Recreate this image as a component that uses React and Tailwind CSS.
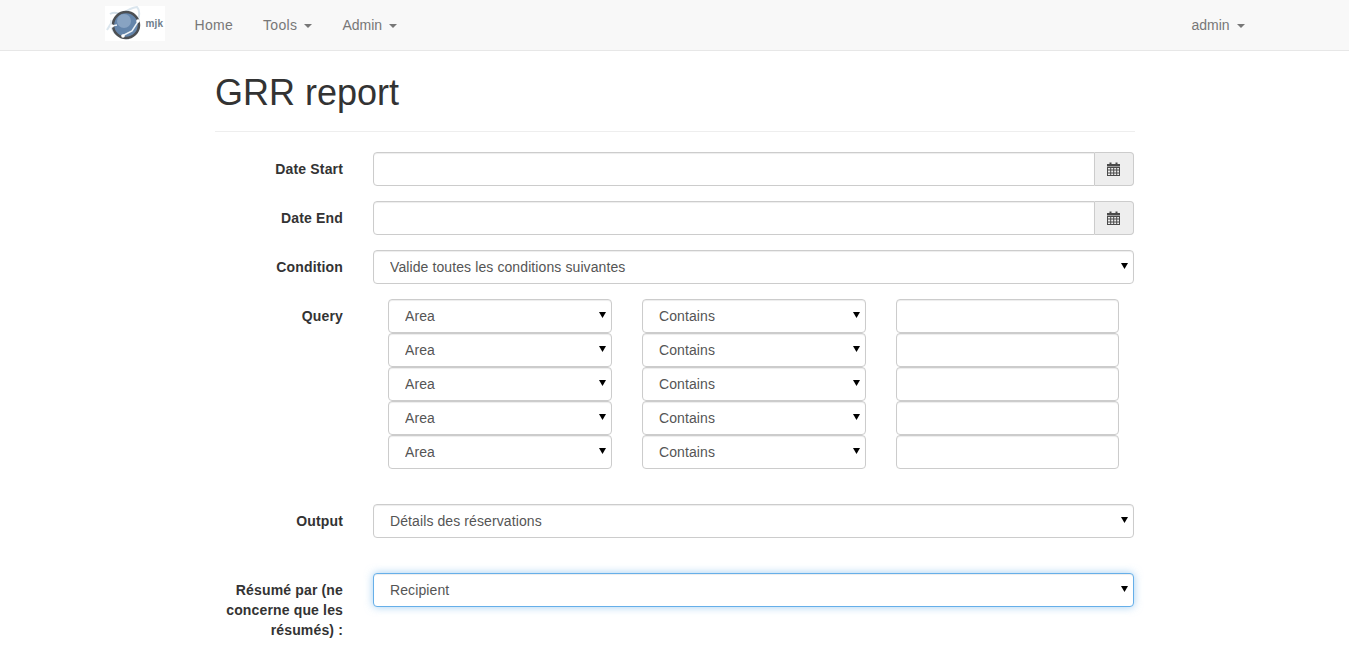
const fieldClass = "block w-full h-[34px] py-1.5 bg-white border rounded text-sm leading-5 tracking-[0.1px] text-[#555] outline-none";
const inputClass = `${fieldClass} px-3 border-[#ccc] shadow-[inset_0_1px_1px_rgba(0,0,0,0.075)]`;
const selectClass = `${fieldClass} pl-4 pr-3 appearance-none border-[#ccc] shadow-[inset_0_1px_1px_rgba(0,0,0,0.075)]`;
const focusClass = `${fieldClass} pl-4 pr-3 appearance-none border-[#66afe9] shadow-[inset_0_1px_1px_rgba(0,0,0,0.075),0_0_8px_rgba(102,175,233,0.6)]`;

function Caret() {
  return <span className="inline-block ml-[3px] align-middle w-0 h-0 border-x-4 border-x-transparent border-t-4 border-t-current"></span>;
}

function NavLink({ children, caret, className = "" }) {
  return (
    <a href="#" className={`block px-[15px] py-[15px] text-sm leading-5 text-[#777] ${className}`}>
      {children}
      {caret && <> <Caret /></>}
    </a>
  );
}

function Logo() {
  return (
    <div className="flex items-center w-[60px] h-[35px] bg-white overflow-hidden">
      <svg width="40" height="35" viewBox="0 0 40 35" className="shrink-0">
        <path d="M5 8 C12 3 26 14 33 26" fill="none" stroke="#d3e0ea" strokeWidth="2" />
        <path d="M2 24 C8 12 24 2 32 1 C36 5 34 14 30 20" fill="none" stroke="#dbe6ee" strokeWidth="2" />
        <path d="M6 14 C4 24 12 33 24 33" fill="none" stroke="#dbe6ee" strokeWidth="1.5" />
        <circle cx="21" cy="19" r="13" fill="#6485ab" stroke="#4c4f53" strokeWidth="2.5" />
        <circle cx="19" cy="15" r="7" fill="#88a3c2" />
        <path d="M7 20 L12 19 M17 30 L27 25 L34 14" fill="none" stroke="#eef3f7" strokeWidth="1.5" />
        <circle cx="7" cy="20" r="1.8" fill="#fff" />
        <circle cx="18" cy="30" r="1.8" fill="#fff" />
        <circle cx="33" cy="15" r="1.8" fill="#fff" />
      </svg>
      <span className="ml-[1px] text-[10px] leading-none font-bold tracking-[0.2px] text-[#6f7d8b]">mjk</span>
    </div>
  );
}

function CalendarIcon() {
  return (
    <svg width="13" height="14" viewBox="0 0 13 14" fill="#4a4a4a" className="-ml-[2px]">
      <path d="M0 2h2.5V0.5h2V2h4V0.5h2V2H13v2.5H0z" />
      <path d="M0 5h13v9H0zM1 6v1.6h2.2V6zm3.2 0v1.6h2V6zm3 0v1.6h2V6zm3 0v1.6H12V6zM1 8.6v1.8h2.2V8.6zm3.2 0v1.8h2V8.6zm3 0v1.8h2V8.6zm3 0v1.8H12V8.6zM1 11.4V13h2.2v-1.6zm3.2 0V13h2v-1.6zm3 0V13h2v-1.6zm3 0V13H12v-1.6z" fillRule="evenodd" />
    </svg>
  );
}

function Row({ label, children, className = "mb-[15px]" }) {
  return (
    <div className={`flex ${className}`}>
      <label className="w-[143px] shrink-0 pr-[15px] pt-[7px] text-right text-sm leading-5 font-bold tracking-[0.15px] text-[#333]">{label}</label>
      <div className="w-[761px] ml-[15px]">{children}</div>
    </div>
  );
}

function DateInput() {
  return (
    <div className="flex">
      <input type="text" className={`${inputClass} flex-1 min-w-0 rounded-r-none`} />
      <span className="flex items-center justify-center w-[39px] h-[34px] bg-[#eee] border border-l-0 border-[#ccc] rounded-r">
        <CalendarIcon />
      </span>
    </div>
  );
}

function Select({ value, focused }) {
  return (
    <div className="relative">
      <select defaultValue={value} className={focused ? focusClass : selectClass}>
        <option>{value}</option>
      </select>
      <svg width="7" height="6" viewBox="0 0 7 6" className="absolute right-[6px] top-[13px] pointer-events-none">
        <path d="M0 0h7L3.5 6z" fill="#000" />
      </svg>
    </div>
  );
}

function QueryRow() {
  return (
    <div className="grid grid-cols-[224px_224px_223px] gap-x-[30px] w-[731px] ml-[15px]">
      <Select value="Area" />
      <Select value="Contains" />
      <input type="text" className={inputClass} />
    </div>
  );
}

export default function App() {
  return (
    <div className="min-h-[667px] bg-white text-sm text-[#333]" style={{ fontFamily: '"Liberation Sans", Arial, sans-serif' }}>
      <nav className="h-[51px] bg-[#f8f8f8] border-b border-[#e7e7e7]">
        <div className="flex items-start w-[1170px] mx-auto pl-[15px]">
          <div className="pt-[6px] mr-[15px]">
            <Logo />
          </div>
          <NavLink className="tracking-[0.3px]">Home</NavLink>
          <NavLink caret className="tracking-[0.3px]">Tools</NavLink>
          <NavLink caret>Admin</NavLink>
          <div className="ml-auto">
            <NavLink caret>admin</NavLink>
          </div>
        </div>
      </nav>

      <main className="w-[920px] ml-[215px]">
        <div className="pt-[22px] pb-[18px] mb-5 border-b border-[#eee]">
          <h1 className="text-[36px] leading-[40px] font-medium text-[#333]">GRR report</h1>
        </div>

        <Row label="Date Start"><DateInput /></Row>
        <Row label="Date End"><DateInput /></Row>
        <Row label="Condition"><Select value="Valide toutes les conditions suivantes" /></Row>

        <Row label="Query" className="mb-[35px]">
          <QueryRow />
          <QueryRow />
          <QueryRow />
          <QueryRow />
          <QueryRow />
        </Row>

        <Row label="Output" className="mb-[35px]"><Select value="Détails des réservations" /></Row>

        <Row label="Résumé par (ne concerne que les résumés) :">
          <Select value="Recipient" focused />
        </Row>
      </main>
    </div>
  );
}
